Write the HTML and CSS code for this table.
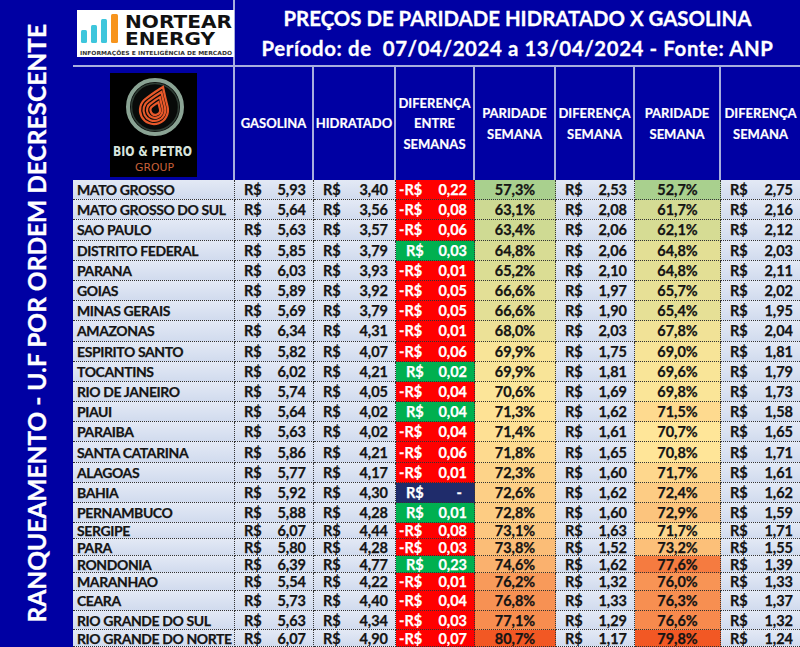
FILE: index.html
```html
<!DOCTYPE html>
<html lang="pt-BR">
<head>
<meta charset="utf-8">
<title>Preços de paridade hidratado x gasolina</title>
<link rel="stylesheet" href="styles.css">
</head>
<body>
<div class="page">
  <aside class="side"><span>RANQUEAMENTO - U.F POR ORDEM DECRESCENTE</span></aside>
  <main class="main">
    <header class="head">
      <div class="logo-top">
        <svg class="nortear" width="157" height="47" viewBox="0 0 157 47">
          <rect width="157" height="47" fill="#fff"/>
          <rect x="4" y="20" width="6" height="13" rx="1.5" fill="#3ec6dc"/>
          <rect x="14" y="15" width="6" height="18" rx="1.5" fill="#3ec6dc"/>
          <rect x="24" y="9" width="6" height="24" rx="1.5" fill="#3ec6dc"/>
          <rect x="34" y="4" width="7" height="29" rx="1.5" fill="#f7941d"/>
          <text x="48" y="18.3" font-family="DejaVu Sans" font-weight="700" font-size="18" textLength="107" lengthAdjust="spacingAndGlyphs" fill="#111">NORTEAR</text>
          <text x="48" y="35" font-family="DejaVu Sans" font-weight="700" font-size="18" textLength="90" lengthAdjust="spacingAndGlyphs" fill="#111">ENERGY</text>
          <text x="3" y="45" font-family="DejaVu Sans" font-weight="700" font-size="5.6" textLength="152" lengthAdjust="spacingAndGlyphs" fill="#333">INFORMAÇÕES E INTELIGÊNCIA DE MERCADO</text>
        </svg>
      </div>
      <div class="title">
        <h1>PREÇOS DE PARIDADE HIDRATADO X GASOLINA</h1>
        <p>Período: de&nbsp; 07/04/2024 a 13/04/2024 - Fonte: ANP</p>
      </div>
      <div class="logo-bio">
        <svg width="87" height="104" viewBox="0 0 87 104">
          <rect width="87" height="104" fill="#000"/>
          <circle cx="45" cy="34" r="27" fill="#080a09" stroke="#8aa394" stroke-width="4"/>
          <circle cx="45" cy="34" r="23.5" fill="none" stroke="#2f3d35" stroke-width="1.5"/>
          <defs>
            <path id="drop" d="M53 14 Q55 24 57.6 33.8 A14 14 0 1 1 36.2 25.4 Q46 18 53 14 Z" vector-effect="non-scaling-stroke"/>
          </defs>
          <g fill="none" stroke="#e8582a" stroke-width="2.2">
            <use href="#drop"/>
            <use href="#drop" transform="translate(46 37) scale(0.78) translate(-46 -37)"/>
            <use href="#drop" transform="translate(46 37) scale(0.56) translate(-46 -37)"/>
            <use href="#drop" transform="translate(46 37) scale(0.34) translate(-46 -37)"/>
          </g>
          <text x="3" y="83" font-family="DejaVu Sans Condensed" font-weight="700" font-size="13.5" textLength="79" lengthAdjust="spacingAndGlyphs" fill="#d8e4dc">BIO &amp; PETRO</text>
          <text x="25" y="98" font-family="DejaVu Sans Condensed" font-size="10" textLength="39" lengthAdjust="spacingAndGlyphs" fill="#c8603a">GROUP</text>
        </svg>
      </div>
      <div class="colheads">
        <div class="ch">GASOLINA</div>
        <div class="ch">HIDRATADO</div>
        <div class="ch">DIFERENÇA<br>ENTRE<br>SEMANAS</div>
        <div class="ch">PARIDADE<br>SEMANA</div>
        <div class="ch">DIFERENÇA<br>SEMANA</div>
        <div class="ch">PARIDADE<br>SEMANA</div>
        <div class="ch">DIFERENÇA<br>SEMANA</div>
      </div>
    </header>

    <div class="table">
      <div class="row"><div class="st">MATO GROSSO</div><div class="cur"><span>R$</span><span>5,93</span></div><div class="cur"><span>R$</span><span>3,40</span></div><div class="cur neg"><span>-R$</span><span>0,22</span></div><div class="pct" style="background:#a9d08e">57,3%</div><div class="cur"><span>R$</span><span>2,53</span></div><div class="pct" style="background:#a9d08e">52,7%</div><div class="cur"><span>R$</span><span>2,75</span></div></div>
      <div class="row"><div class="st">MATO GROSSO DO SUL</div><div class="cur"><span>R$</span><span>5,64</span></div><div class="cur"><span>R$</span><span>3,56</span></div><div class="cur neg"><span>-R$</span><span>0,08</span></div><div class="pct" style="background:#cdd993">63,1%</div><div class="cur"><span>R$</span><span>2,08</span></div><div class="pct" style="background:#d4db94">61,7%</div><div class="cur"><span>R$</span><span>2,16</span></div></div>
      <div class="row"><div class="st">SAO PAULO</div><div class="cur"><span>R$</span><span>5,63</span></div><div class="cur"><span>R$</span><span>3,57</span></div><div class="cur neg"><span>-R$</span><span>0,06</span></div><div class="pct" style="background:#cfda93">63,4%</div><div class="cur"><span>R$</span><span>2,06</span></div><div class="pct" style="background:#d6dc94">62,1%</div><div class="cur"><span>R$</span><span>2,12</span></div></div>
      <div class="row"><div class="st">DISTRITO FEDERAL</div><div class="cur"><span>R$</span><span>5,85</span></div><div class="cur"><span>R$</span><span>3,79</span></div><div class="cur pos"><span>R$</span><span>0,03</span></div><div class="pct" style="background:#d8dc94">64,8%</div><div class="cur"><span>R$</span><span>2,06</span></div><div class="pct" style="background:#e3df95">64,8%</div><div class="cur"><span>R$</span><span>2,03</span></div></div>
      <div class="row"><div class="st">PARANA</div><div class="cur"><span>R$</span><span>6,03</span></div><div class="cur"><span>R$</span><span>3,93</span></div><div class="cur neg"><span>-R$</span><span>0,01</span></div><div class="pct" style="background:#dbdd94">65,2%</div><div class="cur"><span>R$</span><span>2,10</span></div><div class="pct" style="background:#e3df95">64,8%</div><div class="cur"><span>R$</span><span>2,11</span></div></div>
      <div class="row"><div class="st">GOIAS</div><div class="cur"><span>R$</span><span>5,89</span></div><div class="cur"><span>R$</span><span>3,92</span></div><div class="cur neg"><span>-R$</span><span>0,05</span></div><div class="pct" style="background:#e3df96">66,6%</div><div class="cur"><span>R$</span><span>1,97</span></div><div class="pct" style="background:#e7e096">65,7%</div><div class="cur"><span>R$</span><span>2,02</span></div></div>
      <div class="row"><div class="st">MINAS GERAIS</div><div class="cur"><span>R$</span><span>5,69</span></div><div class="cur"><span>R$</span><span>3,79</span></div><div class="cur neg"><span>-R$</span><span>0,05</span></div><div class="pct" style="background:#e3df96">66,6%</div><div class="cur"><span>R$</span><span>1,90</span></div><div class="pct" style="background:#e6e096">65,4%</div><div class="cur"><span>R$</span><span>1,95</span></div></div>
      <div class="row"><div class="st">AMAZONAS</div><div class="cur"><span>R$</span><span>6,34</span></div><div class="cur"><span>R$</span><span>4,31</span></div><div class="cur neg"><span>-R$</span><span>0,01</span></div><div class="pct" style="background:#ece197">68,0%</div><div class="cur"><span>R$</span><span>2,03</span></div><div class="pct" style="background:#f1e297">67,8%</div><div class="cur"><span>R$</span><span>2,04</span></div></div>
      <div class="row"><div class="st">ESPIRITO SANTO</div><div class="cur"><span>R$</span><span>5,82</span></div><div class="cur"><span>R$</span><span>4,07</span></div><div class="cur neg"><span>-R$</span><span>0,06</span></div><div class="pct" style="background:#f8e498">69,9%</div><div class="cur"><span>R$</span><span>1,75</span></div><div class="pct" style="background:#f7e498">69,0%</div><div class="cur"><span>R$</span><span>1,81</span></div></div>
      <div class="row"><div class="st">TOCANTINS</div><div class="cur"><span>R$</span><span>6,02</span></div><div class="cur"><span>R$</span><span>4,21</span></div><div class="cur pos"><span>R$</span><span>0,02</span></div><div class="pct" style="background:#f8e498">69,9%</div><div class="cur"><span>R$</span><span>1,81</span></div><div class="pct" style="background:#f9e598">69,6%</div><div class="cur"><span>R$</span><span>1,79</span></div></div>
      <div class="row"><div class="st">RIO DE JANEIRO</div><div class="cur"><span>R$</span><span>5,74</span></div><div class="cur"><span>R$</span><span>4,05</span></div><div class="cur neg"><span>-R$</span><span>0,04</span></div><div class="pct" style="background:#fce599">70,6%</div><div class="cur"><span>R$</span><span>1,69</span></div><div class="pct" style="background:#fae598">69,8%</div><div class="cur"><span>R$</span><span>1,73</span></div></div>
      <div class="row"><div class="st">PIAUI</div><div class="cur"><span>R$</span><span>5,64</span></div><div class="cur"><span>R$</span><span>4,02</span></div><div class="cur pos"><span>R$</span><span>0,04</span></div><div class="pct" style="background:#fee295">71,3%</div><div class="cur"><span>R$</span><span>1,62</span></div><div class="pct" style="background:#feda8f">71,5%</div><div class="cur"><span>R$</span><span>1,58</span></div></div>
      <div class="row"><div class="st">PARAIBA</div><div class="cur"><span>R$</span><span>5,63</span></div><div class="cur"><span>R$</span><span>4,02</span></div><div class="cur neg"><span>-R$</span><span>0,04</span></div><div class="pct" style="background:#fee094">71,4%</div><div class="cur"><span>R$</span><span>1,61</span></div><div class="pct" style="background:#ffe699">70,7%</div><div class="cur"><span>R$</span><span>1,65</span></div></div>
      <div class="row"><div class="st">SANTA CATARINA</div><div class="cur"><span>R$</span><span>5,86</span></div><div class="cur"><span>R$</span><span>4,21</span></div><div class="cur neg"><span>-R$</span><span>0,06</span></div><div class="pct" style="background:#feda8f">71,8%</div><div class="cur"><span>R$</span><span>1,65</span></div><div class="pct" style="background:#ffe598">70,8%</div><div class="cur"><span>R$</span><span>1,71</span></div></div>
      <div class="row"><div class="st">ALAGOAS</div><div class="cur"><span>R$</span><span>5,77</span></div><div class="cur"><span>R$</span><span>4,17</span></div><div class="cur neg"><span>-R$</span><span>0,01</span></div><div class="pct" style="background:#fdd389">72,3%</div><div class="cur"><span>R$</span><span>1,60</span></div><div class="pct" style="background:#fed78d">71,7%</div><div class="cur"><span>R$</span><span>1,61</span></div></div>
      <div class="row"><div class="st">BAHIA</div><div class="cur"><span>R$</span><span>5,92</span></div><div class="cur"><span>R$</span><span>4,30</span></div><div class="cur zero"><span>R$</span><span>-</span></div><div class="pct" style="background:#fdcf86">72,6%</div><div class="cur"><span>R$</span><span>1,62</span></div><div class="pct" style="background:#fdcc84">72,4%</div><div class="cur"><span>R$</span><span>1,62</span></div></div>
      <div class="row"><div class="st">PERNAMBUCO</div><div class="cur"><span>R$</span><span>5,88</span></div><div class="cur"><span>R$</span><span>4,28</span></div><div class="cur pos"><span>R$</span><span>0,01</span></div><div class="pct" style="background:#fdcc83">72,8%</div><div class="cur"><span>R$</span><span>1,60</span></div><div class="pct" style="background:#fcc47d">72,9%</div><div class="cur"><span>R$</span><span>1,59</span></div></div>
      <div class="row"><div class="st">SERGIPE</div><div class="cur"><span>R$</span><span>6,07</span></div><div class="cur"><span>R$</span><span>4,44</span></div><div class="cur neg"><span>-R$</span><span>0,08</span></div><div class="pct" style="background:#fcc780">73,1%</div><div class="cur"><span>R$</span><span>1,63</span></div><div class="pct" style="background:#fed78d">71,7%</div><div class="cur"><span>R$</span><span>1,71</span></div></div>
      <div class="row"><div class="st">PARA</div><div class="cur"><span>R$</span><span>5,80</span></div><div class="cur"><span>R$</span><span>4,28</span></div><div class="cur neg"><span>-R$</span><span>0,03</span></div><div class="pct" style="background:#fbbd77">73,8%</div><div class="cur"><span>R$</span><span>1,52</span></div><div class="pct" style="background:#fcc079">73,2%</div><div class="cur"><span>R$</span><span>1,55</span></div></div>
      <div class="row"><div class="st">RONDONIA</div><div class="cur"><span>R$</span><span>6,39</span></div><div class="cur"><span>R$</span><span>4,77</span></div><div class="cur pos"><span>R$</span><span>0,23</span></div><div class="pct" style="background:#fab16e">74,6%</div><div class="cur"><span>R$</span><span>1,62</span></div><div class="pct" style="background:#f57b40">77,6%</div><div class="cur"><span>R$</span><span>1,39</span></div></div>
      <div class="row"><div class="st">MARANHAO</div><div class="cur"><span>R$</span><span>5,54</span></div><div class="cur"><span>R$</span><span>4,22</span></div><div class="cur neg"><span>-R$</span><span>0,01</span></div><div class="pct" style="background:#f89a5a">76,2%</div><div class="cur"><span>R$</span><span>1,32</span></div><div class="pct" style="background:#f89455">76,0%</div><div class="cur"><span>R$</span><span>1,33</span></div></div>
      <div class="row"><div class="st">CEARA</div><div class="cur"><span>R$</span><span>5,73</span></div><div class="cur"><span>R$</span><span>4,40</span></div><div class="cur neg"><span>-R$</span><span>0,04</span></div><div class="pct" style="background:#f79153">76,8%</div><div class="cur"><span>R$</span><span>1,33</span></div><div class="pct" style="background:#f78f51">76,3%</div><div class="cur"><span>R$</span><span>1,37</span></div></div>
      <div class="row"><div class="st">RIO GRANDE DO SUL</div><div class="cur"><span>R$</span><span>5,63</span></div><div class="cur"><span>R$</span><span>4,34</span></div><div class="cur neg"><span>-R$</span><span>0,03</span></div><div class="pct" style="background:#f78d4f">77,1%</div><div class="cur"><span>R$</span><span>1,29</span></div><div class="pct" style="background:#f78a4d">76,6%</div><div class="cur"><span>R$</span><span>1,32</span></div></div>
      <div class="row"><div class="st">RIO GRANDE DO NORTE</div><div class="cur"><span>R$</span><span>6,07</span></div><div class="cur"><span>R$</span><span>4,90</span></div><div class="cur neg"><span>-R$</span><span>0,07</span></div><div class="pct" style="background:#f25824">80,7%</div><div class="cur"><span>R$</span><span>1,17</span></div><div class="pct" style="background:#f25824">79,8%</div><div class="cur"><span>R$</span><span>1,24</span></div></div>
    </div>
  </main>
</div>
</body>
</html>
```

FILE: styles.css
```css
* { box-sizing: border-box; }
html, body { margin: 0; padding: 0; }
body {
  width: 800px;
  height: 647px;
  overflow: hidden;
  background: #0000a3;
  font-family: Lato, "Open Sans", sans-serif;
}
.page { display: flex; height: 647px; }

.side {
  width: 73px;
  flex: none;
  display: flex;
  align-items: center;
  justify-content: center;
}
.side span {
  writing-mode: vertical-rl;
  transform: rotate(180deg);
  color: #fff;
  font-weight: 700;
  font-size: 24.5px;
  white-space: nowrap;
  -webkit-text-stroke: 0.3px #fff;
}

.main { width: 727px; flex: none; }

.head {
  display: grid;
  grid-template-columns: 162px 565px;
  grid-template-rows: 67px 113px;
}
.logo-top {
  border-right: 2px solid #a7aede;
  border-bottom: 2px solid #a7aede;
  padding: 10px 0 0 4px;
}
.logo-top svg { display: block; }
.title {
  border-bottom: 2px solid #a7aede;
  color: #fff;
  text-align: center;
  padding-top: 3px;
}
.title h1, .title p {
  margin: 0;
  font-size: 20.4px;
  line-height: 30px;
  font-weight: 700;
  white-space: nowrap;
  -webkit-text-stroke: 0.3px #fff;
}
.title p { letter-spacing: 0.6px; }
.logo-bio {
  border-right: 2px solid #a7aede;
  display: flex;
  align-items: center;
  justify-content: center;
  padding-top: 2px;
}
.logo-bio svg { display: block; }

.colheads {
  display: grid;
  grid-template-columns: 79px 82px 79px 81px 79px 86px 79px;
}
.ch {
  border-right: 2px solid #a7aede;
  color: #fff;
  font-weight: 700;
  font-size: 13px;
  line-height: 20.5px;
  display: flex;
  align-items: center;
  justify-content: center;
  text-align: center;
  white-space: nowrap;
  -webkit-text-stroke: 0.2px #fff;
}
.ch:last-child { border-right: 0; }

.table {
  display: grid;
  grid-template-columns: 162px 79px 82px 79px 81px 79px 86px 79px;
  grid-template-rows: repeat(17, 20.2px) 16px 17px 17px 18px 20px 19px 17px;
}
.row { display: contents; }
.row > div {
  border-right: 1px dotted #333;
  border-bottom: 1px dotted #333;
  display: flex;
  align-items: center;
  font-weight: 700;
  font-size: 14.5px;
  color: #141414;
  background: linear-gradient(#e3e9f5, #d1dbee);
  white-space: nowrap;
  overflow: hidden;
  -webkit-text-stroke: 0.25px currentColor;
}
.row > div:last-child { border-right: 0; }
.row > .st { padding-left: 4px; font-size: 14px; letter-spacing: -0.4px; }
.cur { justify-content: space-between; padding: 0 7px 0 9px; }
.row > .neg { background: #ff0000; color: #fff; padding-left: 3px; }
.row > .pos { background: #00b050; color: #fff; padding-left: 10px; }
.row > .zero { background: #1f2c6b; color: #fff; padding-left: 10px; padding-right: 12px; }
.pct { justify-content: center; }
```
